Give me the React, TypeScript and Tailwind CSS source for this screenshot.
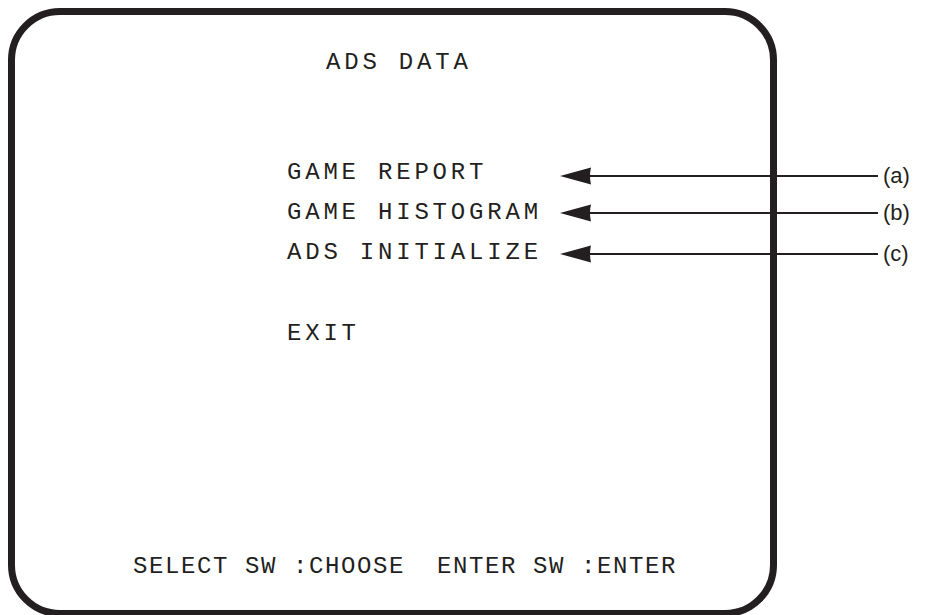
import React from "react";

const mono = { fontFamily: '"Liberation Mono", "DejaVu Sans Mono", monospace' } as const;

function Arrow() {
  return (
    <svg width="318" height="22" viewBox="0 0 318 22" className="block shrink-0">
      <line x1="20" y1="11" x2="318" y2="11" stroke="#231f20" strokeWidth="2" />
      <path d="M0 11 L31 2.5 Q29 11 31 19.5 Z" fill="#231f20" />
    </svg>
  );
}

function Note({ label, className }: { label: string; className?: string }) {
  return (
    <div className={"flex h-[22px] items-center gap-[5px] " + (className ?? "")}>
      <Arrow />
      <span
        className="text-[22px] leading-[22px] text-[#231f20]"
        style={{ fontFamily: '"Liberation Sans", Arial, sans-serif' }}
      >
        {label}
      </span>
    </div>
  );
}

export default function App() {
  return (
    <div className="relative h-[615px] w-[926px] overflow-hidden bg-white">
      <div className="ml-[8px] mt-[8px] flex h-[609px] w-[769px] flex-col rounded-[52px] border-[7px] border-[#231f20] text-[#231f20]" style={mono}>
        <div className="ml-[311px] mt-[37px] h-[22px] text-[24px] leading-[22px] tracking-[3.8px]">ADS DATA</div>
        <div className="ml-[272px] mt-[88px] flex flex-col gap-[18px] text-[24px] leading-[22px] tracking-[3.8px]">
          <div className="h-[22px]">GAME REPORT</div>
          <div className="h-[22px]">GAME HISTOGRAM</div>
          <div className="h-[22px]">ADS INITIALIZE</div>
          <div className="mt-[41px] h-[22px]">EXIT</div>
        </div>
        <div className="ml-[118px] mt-[211px] h-[22px] whitespace-pre text-[24px] leading-[22px] tracking-[1.6px]">
          {"SELECT SW :CHOOSE  ENTER SW :ENTER"}
        </div>
      </div>
      <div className="absolute left-[560px] top-[165px] flex flex-col">
        <Note label="(a)" />
        <Note label="(b)" className="mt-[15px]" />
        <Note label="(c)" className="mt-[19px]" />
      </div>
    </div>
  );
}
